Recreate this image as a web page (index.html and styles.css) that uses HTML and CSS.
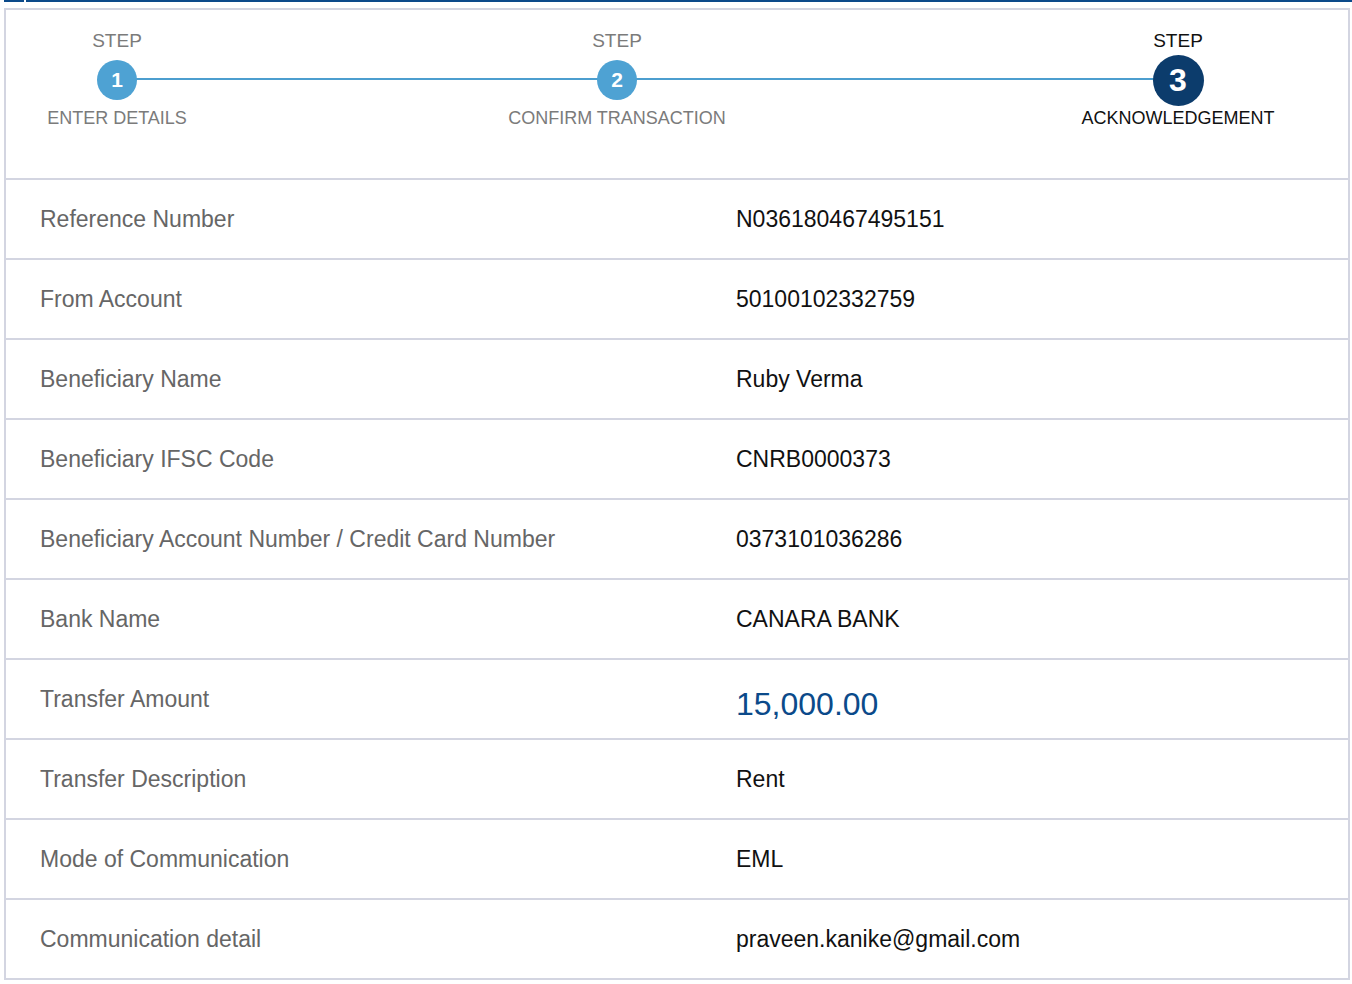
FILE: index.html
```html
<!DOCTYPE html>
<html>
<head>
<meta charset="utf-8">
<link rel="stylesheet" href="styles.css">
</head>
<body>
<div class="topbar"><div class="tb-a"></div><div class="tb-b"></div></div>
<div class="panel">
  <div class="stepper">
    <div class="track"></div>
    <div class="step">
      <div class="step-cap">STEP</div>
      <div class="dot-slot"><div class="dot">1</div></div>
      <div class="step-label">ENTER DETAILS</div>
    </div>
    <div class="step step-2">
      <div class="step-cap">STEP</div>
      <div class="dot-slot"><div class="dot">2</div></div>
      <div class="step-label">CONFIRM TRANSACTION</div>
    </div>
    <div class="step step-3 active">
      <div class="step-cap">STEP</div>
      <div class="dot-slot"><div class="dot">3</div></div>
      <div class="step-label">ACKNOWLEDGEMENT</div>
    </div>
  </div>
  <div class="row"><div class="label">Reference Number</div><div class="value">N036180467495151</div></div>
  <div class="row"><div class="label">From Account</div><div class="value">50100102332759</div></div>
  <div class="row"><div class="label">Beneficiary Name</div><div class="value">Ruby Verma</div></div>
  <div class="row"><div class="label">Beneficiary IFSC Code</div><div class="value">CNRB0000373</div></div>
  <div class="row"><div class="label">Beneficiary Account Number / Credit Card Number</div><div class="value">0373101036286</div></div>
  <div class="row"><div class="label">Bank Name</div><div class="value">CANARA BANK</div></div>
  <div class="row"><div class="label">Transfer Amount</div><div class="value amount">15,000.00</div></div>
  <div class="row"><div class="label">Transfer Description</div><div class="value">Rent</div></div>
  <div class="row"><div class="label">Mode of Communication</div><div class="value">EML</div></div>
  <div class="row last"><div class="label">Communication detail</div><div class="value">praveen.kanike@gmail.com</div></div>
</div>
</body>
</html>
```

FILE: styles.css
```css
html, body {
  margin: 0;
  padding: 0;
  background: #ffffff;
  font-family: "Liberation Sans", Arial, Helvetica, sans-serif;
}

.topbar {
  display: flex;
  gap: 2px;
  height: 2px;
  padding-left: 4px;
}
.tb-a { width: 20px; background: #0b4a8a; }
.tb-b { flex: 1; background: #0b4a8a; }

.panel {
  margin: 6px 0 0 4px;
  width: 1342px;
  border: 2px solid #d3d5e1;
  border-bottom: none;
}

.stepper {
  position: relative;
  height: 168px;
  display: flex;
  padding-left: 11px;
  box-sizing: border-box;
}

.track {
  position: absolute;
  left: 111px;
  top: 68px;
  width: 1061px;
  height: 2px;
  background: #4c9ecf;
}

.step {
  position: relative;
  width: 200px;
  display: flex;
  flex-direction: column;
  align-items: center;
  padding-top: 20px;
}
.step-2 { margin-left: 300px; }
.step-3 { margin-left: 361px; }

.step-cap {
  font-size: 19px;
  line-height: 22px;
  color: #7b7b7b;
}
.step-label {
  margin-top: 7px;
  font-size: 18px;
  line-height: 22px;
  color: #7b7b7b;
  white-space: nowrap;
}
.step.active .step-cap,
.step.active .step-label { color: #111111; }

.dot-slot {
  margin-top: 8px;
  height: 40px;
  width: 60px;
  display: flex;
  align-items: center;
  justify-content: center;
}
.dot {
  width: 40px;
  height: 40px;
  border-radius: 50%;
  background: #4ea2d3;
  color: #ffffff;
  font-weight: bold;
  font-size: 21px;
  display: flex;
  align-items: center;
  justify-content: center;
  flex-shrink: 0;
}
.step.active .dot {
  width: 51px;
  height: 51px;
  background: #0c3c6c;
  font-size: 32px;
}

.row {
  display: flex;
  align-items: center;
  height: 78px;
  border-top: 2px solid #d3d5e1;
}
.row.last { border-bottom: 2px solid #d3d5e1; }

.label {
  width: 730px;
  padding-left: 34px;
  box-sizing: border-box;
  font-size: 23px;
  color: #666666;
}
.value {
  font-size: 23px;
  color: #111111;
}
.value.amount {
  font-size: 32px;
  color: #0b4a8a;
  padding-top: 11px;
}
```
